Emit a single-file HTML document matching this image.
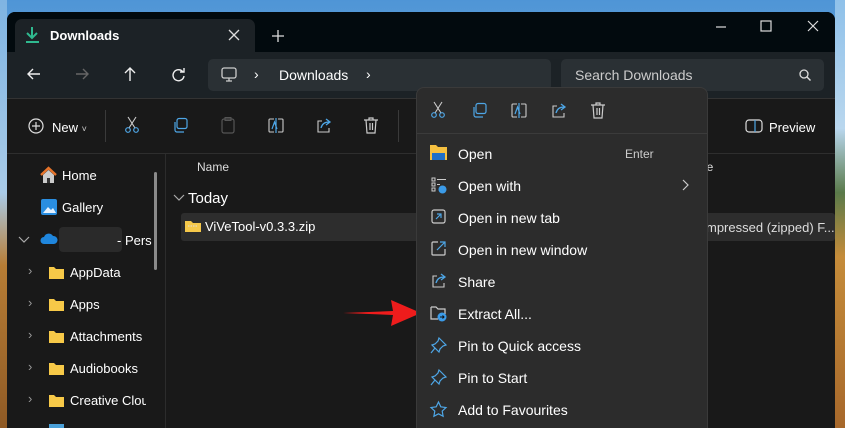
<!DOCTYPE html>
<html><head><meta charset="utf-8"><style>
*{box-sizing:border-box;margin:0;padding:0}
html,body{width:845px;height:428px;overflow:hidden}
body{position:relative;font-family:"Liberation Sans",sans-serif;color:#fff;background:linear-gradient(180deg,#4f95d6 0%,#7db5e0 40%,#c79a4e 60%,#a86a2c 100%)}
.abs{position:absolute}
.t{position:absolute;font-size:13px;color:#fff;white-space:nowrap}
svg{position:absolute;overflow:visible}
</style></head><body>
<div class="abs" style="left:835px;top:0;width:10px;height:428px;background:linear-gradient(180deg,#8fc1ea 0%,#b9d7ee 30%,#5a7a4a 45%,#c58c3a 60%,#a7682b 100%)"></div>
<div class="abs" style="left:0;top:0;width:7px;height:428px;background:linear-gradient(180deg,#7fb4e2 0%,#a9cbe8 45%,#b77d35 62%,#8f5a25 100%)"></div>
<div class="abs" style="left:7px;top:12px;width:828px;height:416px;background:#191919;border-radius:8px 8px 0 0;overflow:hidden">
 <div class="abs" style="left:0;top:0;width:828px;height:40px;background:#020a0e"></div>
 <div class="abs" style="left:8px;top:7px;width:240px;height:34px;background:#1c2226;border-radius:7px 7px 0 0"></div>
 <div class="abs" style="left:0;top:40px;width:828px;height:46px;background:#1c2226"></div>
 <div class="abs" style="left:201px;top:47px;width:343px;height:32px;background:#2a3034;border-radius:5px"></div>
 <div class="abs" style="left:554px;top:47px;width:263px;height:32px;background:#2a3034;border-radius:5px"></div>
 <div class="abs" style="left:0;top:86px;width:828px;height:1px;background:#333"></div>
 <div class="abs" style="left:0;top:141px;width:828px;height:1px;background:#2e2e2e"></div>
 <div class="abs" style="left:158px;top:142px;width:1px;height:274px;background:#2c2c2c"></div>
 <div class="abs" style="left:147px;top:160px;width:3px;height:98px;background:#8a8a8a;border-radius:2px"></div>
 <div class="abs" style="left:174px;top:201px;width:654px;height:28px;background:#2d2d2d;border-radius:3px"></div>
 <div class="abs" style="left:52px;top:215px;width:63px;height:25px;background:#2a2a2a;border-radius:4px"></div>
</div>
<svg style="left:25px;top:26px" width="16" height="18"><path d="M7 1v11M2 7l5 5 5-5M1 16h13" stroke="#2fb98f" stroke-width="2" fill="none"/></svg>
<div class="t" style="left:50px;top:28px;font-weight:bold;font-size:13px">Downloads</div>
<svg style="left:229px;top:30px" width="10" height="10"><path d="M0 0l10 10M10 0L0 10" stroke="#ddd" stroke-width="1.3"/></svg>
<svg style="left:272px;top:30px" width="12" height="12"><path d="M6 0v12M0 6h12" stroke="#ddd" stroke-width="1.3"/></svg>
<svg style="left:716px;top:26px" width="10" height="2"><path d="M0 1h10" stroke="#ddd" stroke-width="1.2"/></svg>
<svg style="left:761px;top:21px" width="10" height="10"><rect x="0" y="0" width="10" height="10" stroke="#ddd" stroke-width="1.2" fill="none"/></svg>
<svg style="left:808px;top:21px" width="10" height="10"><path d="M0 0l10 10M10 0L0 10" stroke="#ddd" stroke-width="1.2"/></svg>
<svg style="left:27px;top:68px" width="13" height="12"><path d="M13 6H1M6 1L1 6l5 5" stroke="#eee" stroke-width="1.4" fill="none"/></svg>
<svg style="left:76px;top:68px" width="13" height="12"><path d="M0 6h12M7 1l5 5-5 5" stroke="#666" stroke-width="1.4" fill="none"/></svg>
<svg style="left:124px;top:67px" width="12" height="14"><path d="M6 14V1M1 6l5-5 5 5" stroke="#eee" stroke-width="1.4" fill="none"/></svg>
<svg style="left:172px;top:68px" width="13" height="13"><path d="M11 4A5.5 5.5 0 1 0 12 8M12 0v4H8" stroke="#eee" stroke-width="1.4" fill="none"/></svg>
<svg style="left:221px;top:67px" width="16" height="15"><rect x="1" y="1" width="14" height="10" rx="2" stroke="#ccc" stroke-width="1.3" fill="none"/><path d="M5 14h6M8 11v3" stroke="#ccc" stroke-width="1.3"/></svg>
<div class="t" style="left:254px;top:66px;font-size:14px">›</div>
<div class="t" style="left:279px;top:67px;font-size:14px">Downloads</div>
<div class="t" style="left:366px;top:66px;font-size:14px">›</div>
<div class="t" style="left:575px;top:67px;font-size:14px;color:#ccc">Search Downloads</div>
<svg style="left:799px;top:69px" width="12" height="12"><circle cx="5" cy="5" r="4" stroke="#ddd" stroke-width="1.3" fill="none"/><path d="M8 8l3.5 3.5" stroke="#ddd" stroke-width="1.4"/></svg>
<svg style="left:28px;top:118px" width="16" height="16"><circle cx="8" cy="8" r="7" stroke="#ddd" stroke-width="1.2" fill="none"/><path d="M8 4v8M4 8h8" stroke="#ddd" stroke-width="1.2"/></svg>
<div class="t" style="left:52px;top:120px">New <span style="font-size:9px;color:#ccc">˅</span></div>
<div class="abs" style="left:105px;top:110px;width:1px;height:32px;background:#3a3a3a"></div>
<div class="abs" style="left:398px;top:110px;width:1px;height:32px;background:#3a3a3a"></div>
<svg style="left:125px;top:117px" width="14" height="17"><path d="M3 0l7 11M11 0L4 11" stroke="#ccc" stroke-width="1.1"/><circle cx="3" cy="13" r="2.3" stroke="#4ea6e6" stroke-width="1.2" fill="none"/><circle cx="11" cy="13" r="2.3" stroke="#4ea6e6" stroke-width="1.2" fill="none"/></svg>
<svg style="left:173px;top:118px" width="15" height="15"><rect x="4" y="0.5" width="10" height="10" rx="2" stroke="#4ea6e6" stroke-width="1.2" fill="none"/><path d="M2 4v8a2 2 0 0 0 2 2h7" stroke="#4ea6e6" stroke-width="1.2" fill="none"/></svg>
<svg style="left:221px;top:117px" width="14" height="17"><rect x="1" y="2" width="12" height="14" rx="2" stroke="#555" stroke-width="1.2" fill="none"/><rect x="4" y="0.5" width="6" height="3" stroke="#555" fill="none"/></svg>
<svg style="left:268px;top:118px" width="16" height="15"><path d="M6 1H2a1 1 0 0 0-1 1v11a1 1 0 0 0 1 1h4M10 1h4a1 1 0 0 1 1 1v11a1 1 0 0 1-1 1h-4" stroke="#ccc" stroke-width="1.1" fill="none"/><path d="M8 0v15M4 11l2.5-7 2.5 7" stroke="#4ea6e6" stroke-width="1.2" fill="none"/></svg>
<svg style="left:316px;top:118px" width="16" height="15"><path d="M6 3H2v11h11v-4" stroke="#ccc" stroke-width="1.1" fill="none"/><path d="M5 10c1-4 4-6 8-6M10 1l4 3-4 3" stroke="#4ea6e6" stroke-width="1.3" fill="none"/></svg>
<svg style="left:364px;top:117px" width="14" height="17"><path d="M0 3h14M5 3V1h4v2M2 3l1 13h8l1-13M6 6v7M8.5 6v7" stroke="#ccc" stroke-width="1.2" fill="none"/></svg>
<svg style="left:745px;top:119px" width="18" height="14"><rect x="1" y="1" width="16" height="12" rx="3" stroke="#ddd" stroke-width="1.2" fill="none"/><path d="M10 1v12" stroke="#4ea6e6" stroke-width="1.2"/></svg>
<div class="t" style="left:769px;top:120px">Preview</div>
<div class="t" style="left:197px;top:160px;font-size:12px;color:#ddd">Name</div>
<div class="t" style="left:700px;top:160px;font-size:12px;color:#ddd">pe</div>
<svg style="left:174px;top:195px" width="10" height="6"><path d="M0 0l5 5 5-5" stroke="#aaa" stroke-width="1.2" fill="none"/></svg>
<div class="t" style="left:188px;top:190px;font-size:15px">Today</div>
<svg style="left:185px;top:220px" width="16" height="12"><path d="M0 1h6l2 2h8v9H0z" fill="#f5c84a"/><path d="M3 6h10" stroke="#ddd" stroke-dasharray="1.5 1"/></svg>
<div class="t" style="left:205px;top:219px">ViVeTool-v0.3.3.zip</div>
<div class="t" style="left:706px;top:220px;color:#ddd">mpressed (zipped) F...</div>
<svg style="left:40px;top:167px" width="17" height="17"><path d="M1 8L8.5 1 16 8" stroke="#e8742a" stroke-width="2.4" fill="none"/><path d="M3 8v8h11V8L8.5 3z" fill="#ccc"/><rect x="7" y="11" width="3" height="5" fill="#333"/></svg>
<div class="t" style="left:62px;top:168px">Home</div>
<svg style="left:41px;top:199px" width="16" height="16"><rect width="16" height="16" rx="2" fill="#2a8ee0"/><path d="M2 14l5-6 3 3 2-2 3 5z" fill="#e5f2ff"/></svg>
<div class="t" style="left:62px;top:200px">Gallery</div>
<svg style="left:19px;top:237px" width="10" height="6"><path d="M0 0l5 5 5-5" stroke="#aaa" stroke-width="1.2" fill="none"/></svg>
<svg style="left:40px;top:233px" width="18" height="12"><path d="M4 11a3.5 3.5 0 0 1 0-7 5 5 0 0 1 9-1 4 4 0 0 1 1 8z" fill="#1f86dd"/></svg>
<div class="t" style="left:117px;top:233px">- Pers</div>
<div class="t" style="left:28px;top:263px;color:#999">›</div><div class="t" style="left:28px;top:295px;color:#999">›</div><div class="t" style="left:28px;top:327px;color:#999">›</div><div class="t" style="left:28px;top:359px;color:#999">›</div><div class="t" style="left:28px;top:391px;color:#999">›</div>
<svg style="left:49px;top:266px" width="15" height="13"><path d="M0 1h5l2 2h8v10H0z" fill="#f7c948"/></svg><div class="t" style="left:70px;top:265px">AppData</div>
<svg style="left:49px;top:298px" width="15" height="13"><path d="M0 1h5l2 2h8v10H0z" fill="#f7c948"/></svg><div class="t" style="left:70px;top:297px">Apps</div>
<svg style="left:49px;top:330px" width="15" height="13"><path d="M0 1h5l2 2h8v10H0z" fill="#f7c948"/></svg><div class="t" style="left:70px;top:329px">Attachments</div>
<svg style="left:49px;top:362px" width="15" height="13"><path d="M0 1h5l2 2h8v10H0z" fill="#f7c948"/></svg><div class="t" style="left:70px;top:361px">Audiobooks</div>
<svg style="left:49px;top:394px" width="15" height="13"><path d="M0 1h5l2 2h8v10H0z" fill="#f7c948"/></svg><div class="t" style="left:70px;top:393px;width:76px;overflow:hidden">Creative Cloud</div>
<svg style="left:49px;top:424px" width="15" height="4"><rect width="15" height="4" fill="#4aa0d8"/></svg>
<svg style="left:343px;top:298px" width="80" height="30"><path d="M0 15L50 13 48 2 78 15 48 28 50 17z" fill="#ee1c1c"/></svg>
<div class="abs" style="left:416px;top:87px;width:292px;height:341px;background:#2c2c2c;border:1px solid #3a3a3a;border-bottom:none;border-radius:8px 8px 0 0"></div>
<div class="abs" style="left:417px;top:133px;width:290px;height:1px;background:#3b3b3b"></div>
<svg style="left:431px;top:102px" width="14" height="17"><path d="M3 0l7 11M11 0L4 11" stroke="#ccc" stroke-width="1.1"/><circle cx="3" cy="13" r="2.3" stroke="#4ea6e6" stroke-width="1.2" fill="none"/><circle cx="11" cy="13" r="2.3" stroke="#4ea6e6" stroke-width="1.2" fill="none"/></svg>
<svg style="left:472px;top:103px" width="15" height="15"><rect x="4" y="0.5" width="10" height="10" rx="2" stroke="#4ea6e6" stroke-width="1.2" fill="none"/><path d="M2 4v8a2 2 0 0 0 2 2h7" stroke="#4ea6e6" stroke-width="1.2" fill="none"/></svg>
<svg style="left:511px;top:103px" width="16" height="15"><path d="M6 1H2a1 1 0 0 0-1 1v11a1 1 0 0 0 1 1h4M10 1h4a1 1 0 0 1 1 1v11a1 1 0 0 1-1 1h-4" stroke="#ccc" stroke-width="1.1" fill="none"/><path d="M8 0v15M4 11l2.5-7 2.5 7" stroke="#4ea6e6" stroke-width="1.2" fill="none"/></svg>
<svg style="left:551px;top:103px" width="16" height="15"><path d="M6 3H2v11h11v-4" stroke="#ccc" stroke-width="1.1" fill="none"/><path d="M5 10c1-4 4-6 8-6M10 1l4 3-4 3" stroke="#4ea6e6" stroke-width="1.3" fill="none"/></svg>
<svg style="left:591px;top:102px" width="14" height="17"><path d="M0 3h14M5 3V1h4v2M2 3l1 13h8l1-13M6 6v7M8.5 6v7" stroke="#ccc" stroke-width="1.2" fill="none"/></svg>
<svg style="left:430px;top:145px" width="17" height="15"><path d="M0 0h6l2 2h9v13H0z" fill="#f5c040"/><rect x="2" y="8" width="13" height="7" fill="#1e6fc8"/></svg>
<div class="t" style="left:458px;top:146px;font-size:14px">Open</div>
<div class="t" style="left:625px;top:147px;font-size:12px;color:#ccc">Enter</div>
<svg style="left:431px;top:177px" width="16" height="17"><path d="M1 1h3v3H1zM1 6h3v3H1zM1 11h3v3H1zM6 2.5h9M6 7.5h3" stroke="#ccc" fill="none"/><circle cx="11.5" cy="12.5" r="4" fill="#3b9be8"/></svg>
<div class="t" style="left:458px;top:178px;font-size:14px">Open with</div>
<svg style="left:683px;top:180px" width="6" height="10"><path d="M0 0l5 5-5 5" stroke="#ccc" stroke-width="1.2" fill="none"/></svg>
<svg style="left:431px;top:209px" width="15" height="15"><rect x="1" y="1" width="13" height="13" rx="2" stroke="#ccc" stroke-width="1.2" fill="none"/><path d="M5 10l5-5M6 5h4v4" stroke="#4ea6e6" stroke-width="1.2" fill="none"/></svg>
<div class="t" style="left:458px;top:210px;font-size:14px">Open in new tab</div>
<svg style="left:431px;top:241px" width="15" height="15"><path d="M7 1H2a1 1 0 0 0-1 1v11a1 1 0 0 0 1 1h11a1 1 0 0 0 1-1V8" stroke="#ccc" stroke-width="1.2" fill="none"/><path d="M6 9l8-8M9 1h5v5" stroke="#4ea6e6" stroke-width="1.2" fill="none"/></svg>
<div class="t" style="left:458px;top:242px;font-size:14px">Open in new window</div>
<svg style="left:431px;top:273px" width="16" height="15"><path d="M6 3H2v11h11v-4" stroke="#ccc" stroke-width="1.1" fill="none"/><path d="M5 10c1-4 4-6 8-6M10 1l4 3-4 3" stroke="#4ea6e6" stroke-width="1.3" fill="none"/></svg>
<div class="t" style="left:458px;top:274px;font-size:14px">Share</div>
<svg style="left:430px;top:305px" width="17" height="17"><path d="M1 2h5l2 2h7v5M1 2v12h7" stroke="#ccc" stroke-width="1.2" fill="none"/><circle cx="12" cy="12" r="4.5" fill="#3b9be8"/><path d="M10 12h4M12.5 10.5l1.5 1.5-1.5 1.5" stroke="#111" fill="none"/></svg>
<div class="t" style="left:458px;top:306px;font-size:14px">Extract All...</div>
<svg style="left:430px;top:337px" width="17" height="17"><path d="M9 1l7 7-3 1-3 3-1 3-7-7 3-1 3-3zM5 11l-4 5" stroke="#4ea6e6" stroke-width="1.2" fill="none"/></svg>
<div class="t" style="left:458px;top:338px;font-size:14px">Pin to Quick access</div>
<svg style="left:430px;top:369px" width="17" height="17"><path d="M9 1l7 7-3 1-3 3-1 3-7-7 3-1 3-3zM5 11l-4 5" stroke="#4ea6e6" stroke-width="1.2" fill="none"/></svg>
<div class="t" style="left:458px;top:370px;font-size:14px">Pin to Start</div>
<svg style="left:430px;top:401px" width="17" height="17"><path d="M8.5 1l2.3 4.8 5.2.7-3.8 3.6.9 5.2-4.6-2.5-4.6 2.5.9-5.2L1 6.5l5.2-.7z" stroke="#4ea6e6" stroke-width="1.2" fill="none"/></svg>
<div class="t" style="left:458px;top:402px;font-size:14px">Add to Favourites</div>
</body></html>
